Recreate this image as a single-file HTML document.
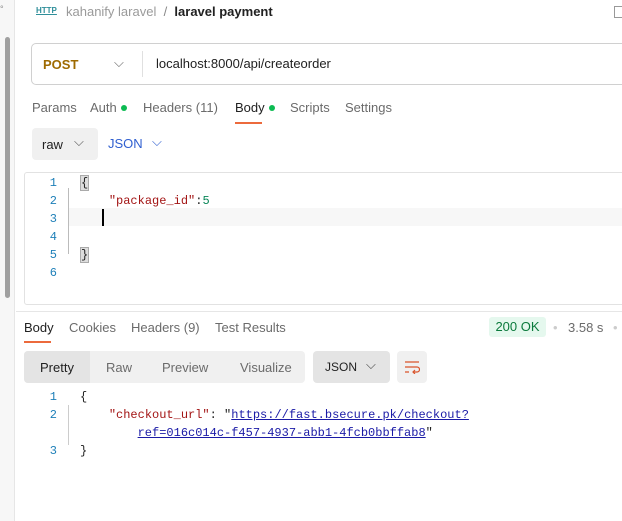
<!DOCTYPE html>
<html><head><style>
*{margin:0;padding:0;box-sizing:border-box}
body{width:622px;height:521px;overflow:hidden;background:#fff;font-family:"Liberation Sans",sans-serif;font-size:13px;color:#212121;position:relative}
.a{position:absolute;white-space:nowrap}
.mono{font-family:"Liberation Mono",monospace;font-size:12px}
.ln{color:#1d7fb8;width:10px;text-align:right}
.g{color:#6b6b6b}
.dot{display:inline-block;width:6px;height:6px;border-radius:50%;background:#0cbb52;margin-left:4px;vertical-align:1px}
</style></head><body>
<div class="a" style="left:0;top:0;width:15px;height:521px;background:#f7f7f7;border-right:1px solid #e6e6e6"></div>
<div class="a" style="left:5px;top:37px;width:5px;height:261px;background:#a0a0a0;border-radius:3px"></div>
<div class="a" style="left:0;top:4px;font-size:9px;color:#888">°</div>
<!-- header -->
<div class="a" style="left:36px;top:6px;font-size:8px;color:#2f8f9a;font-weight:bold;text-decoration:underline">HTTP</div>
<div class="a" style="left:66px;top:4px;font-size:13px;color:#9a9a9a">kahanify laravel <span style="color:#888">&nbsp;/&nbsp;</span> <span style="color:#212121;font-weight:bold">laravel payment</span></div>
<div class="a" style="left:614px;top:6px;width:10px;height:12px;border:1px solid #999"></div>
<!-- url -->
<div class="a" style="left:31px;top:43px;width:605px;height:42px;border:1px solid #d0d0d0;border-radius:5px"></div>
<div class="a" style="left:43px;top:57px;color:#9e6a00;font-weight:bold">POST</div>
<div class="a" style="left:114px;top:55px;color:#666">⌵</div>
<div class="a" style="left:142px;top:51px;width:1px;height:26px;background:#e0e0e0"></div>
<div class="a" style="left:156px;top:56px">localhost:8000/api/createorder</div>
<!-- tabs -->
<div class="a g" style="left:32px;top:100px">Params</div>
<div class="a g" style="left:90px;top:100px">Auth<span class="dot"></span></div>
<div class="a g" style="left:143px;top:100px">Headers <span>(11)</span></div>
<div class="a" style="left:235px;top:100px">Body<span class="dot"></span></div>
<div class="a" style="left:235px;top:122px;width:27px;height:2px;background:#ec6a3c"></div>
<div class="a g" style="left:290px;top:100px">Scripts</div>
<div class="a g" style="left:345px;top:100px">Settings</div>
<!-- raw/json -->
<div class="a" style="left:32px;top:128px;width:66px;height:32px;background:#f0f0f0;border-radius:4px"></div>
<div class="a" style="left:42px;top:137px">raw</div>
<div class="a" style="left:74px;top:134px;color:#555">⌵</div>
<div class="a" style="left:108px;top:136px;color:#2f5fd0">JSON</div>
<div class="a" style="left:152px;top:134px;color:#2f5fd0">⌵</div>
<!-- editor -->
<div class="a" style="left:24px;top:172px;width:610px;height:133px;border:1px solid #e2e2e2;border-radius:3px"></div>
<div class="a" style="left:69px;top:208px;width:553px;height:18px;background:#f7f7f7"></div>
<div class="a" style="left:68px;top:188px;width:1px;height:66px;background:#bbb"></div>
<div class="a mono ln" style="left:47px;top:174px;line-height:18px;white-space:pre">1
2
3
4
5
6</div>
<div class="a mono" style="left:80px;top:174px;line-height:18px;white-space:pre"><span style="background:#ddd;border:1px solid #aaa">{</span>
    <span style="color:#a31515">"package_id"</span>:<span style="color:#098658">5</span>

 
<span style="background:#ddd;border:1px solid #aaa">}</span></div>
<div class="a" style="left:102px;top:209px;width:2px;height:17px;background:#000"></div>
<!-- separator -->
<div class="a" style="left:16px;top:311px;width:606px;height:1px;background:#e6e6e6"></div>
<!-- response tabs -->
<div class="a" style="left:24px;top:320px">Body</div>
<div class="a" style="left:24px;top:341px;width:27px;height:2px;background:#ec6a3c"></div>
<div class="a g" style="left:69px;top:320px">Cookies</div>
<div class="a g" style="left:131px;top:320px">Headers <span>(9)</span></div>
<div class="a g" style="left:215px;top:320px">Test Results</div>
<div class="a" style="left:489px;top:317px;width:57px;height:20px;background:#e5f8ee;border-radius:3px;color:#0b7a3c;text-align:center;line-height:20px">200 OK</div>
<div class="a" style="left:553px;top:320px;color:#ccc">•</div>
<div class="a g" style="left:568px;top:320px">3.58 s</div>
<div class="a" style="left:613px;top:320px;color:#ccc">•</div>
<!-- response toolbar -->
<div class="a" style="left:24px;top:351px;width:281px;height:32px;background:#f0f0f0;border-radius:4px"></div>
<div class="a" style="left:24px;top:351px;width:66px;height:32px;background:#e4e4e4;border-radius:4px 0 0 4px"></div>
<div class="a" style="left:40px;top:360px">Pretty</div>
<div class="a g" style="left:106px;top:360px">Raw</div>
<div class="a g" style="left:162px;top:360px">Preview</div>
<div class="a g" style="left:240px;top:360px">Visualize</div>
<div class="a" style="left:313px;top:351px;width:77px;height:32px;background:#e4e4e4;border-radius:4px"></div>
<div class="a" style="left:325px;top:360px;font-size:12px">JSON</div>
<div class="a" style="left:366px;top:357px;color:#444">⌵</div>
<div class="a" style="left:397px;top:351px;width:30px;height:32px;background:#f0f0f0;border-radius:4px"></div>
<svg class="a" style="left:404px;top:360px" width="16" height="14" viewBox="0 0 16 14"><path d="M1 2h14M1 7h12a2.5 2.5 0 0 1 0 5H9M11 10l-2 2 2 2M1 12h4" fill="none" stroke="#d9542b" stroke-width="1.2"/></svg>
<!-- response code -->
<div class="a" style="left:68px;top:405px;width:1px;height:40px;background:#ccc"></div>
<div class="a mono ln" style="left:47px;top:388px;line-height:18px;white-space:pre">1
2

3</div>
<div class="a mono" style="left:80px;top:388px;line-height:18px;white-space:pre">{
    <span style="color:#a31515">"checkout_url"</span>: "<span style="color:#1a1aa6;text-decoration:underline">https://fast.bsecure.pk/checkout?</span>
        <span style="color:#1a1aa6;text-decoration:underline">ref=016c014c-f457-4937-abb1-4fcb0bbffab8</span>"
}</div>
</body></html>
